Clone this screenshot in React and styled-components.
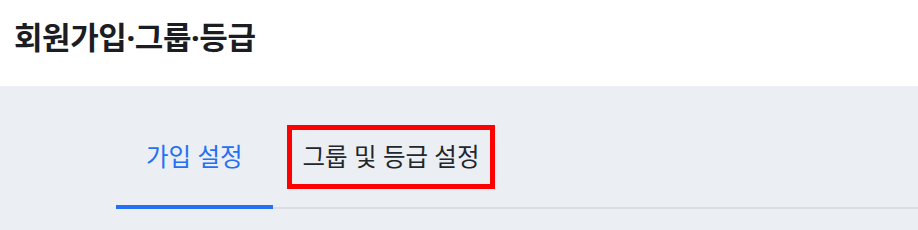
import { useState } from "react";
import styled, { createGlobalStyle } from "styled-components";

const GlobalStyle = createGlobalStyle`
  html, body {
    margin: 0;
    padding: 0;
    background: #ebeef3;
    font-family: "Noto Sans", "Noto Sans CJK KR", sans-serif;
  }
`;

const Page = styled.div`
  display: flex;
  flex-direction: column;
  min-height: 230px;
`;

const Header = styled.header`
  height: 86px;
  background: #ffffff;
  display: flex;
  align-items: center;
  padding: 0 0 16px 14px;
  box-sizing: border-box;
`;

const Title = styled.h1`
  margin: 0;
  font-size: 31px;
  font-weight: 700;
  color: #1b1d22;
  letter-spacing: -0.4px;
`;

const Content = styled.main`
  flex: 1;
  background: #ebeef3;
  padding: 20px 0 0 116px;
`;

const TabBar = styled.nav`
  display: flex;
  border-bottom: 2px solid #dcdde2;
`;

const Tab = styled.button`
  border: none;
  background: none;
  margin: 0 0 -2px;
  padding: 35px 30px 32px;
  font-family: inherit;
  font-size: 24.5px;
  line-height: 32px;
  cursor: pointer;
  color: ${p => (p.$active ? "#2470f4" : "#23262c")};
  border-bottom: 4px solid ${p => (p.$active ? "#2470f4" : "transparent")};
`;

const Label = styled.span`
  display: inline-block;
  outline: ${p => (p.$marked ? "5px solid #ff0000" : "none")};
  outline-offset: 11px;
`;

const tabs = ["가입 설정", "그룹 및 등급 설정"];

const App = () => {
  const [active, setActive] = useState(0);

  return (
    <Page>
      <GlobalStyle />
      <Header>
        <Title>회원가입·그룹·등급</Title>
      </Header>
      <Content>
        <TabBar>
          {tabs.map((t, i) => (
            <Tab key={t} $active={active === i} onClick={() => setActive(i)}>
              <Label $marked={i === 1}>{t}</Label>
            </Tab>
          ))}
        </TabBar>
      </Content>
    </Page>
  );
};

export default App;
